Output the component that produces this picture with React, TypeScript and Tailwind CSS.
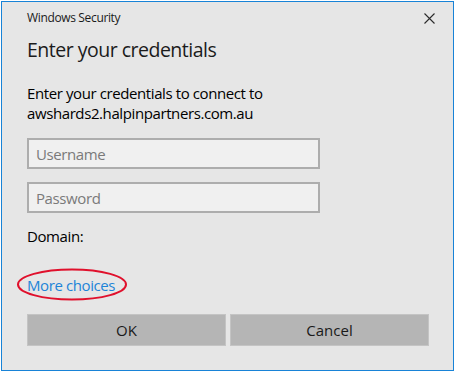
import { useState } from "react";

export default function App() {
  const [username, setUsername] = useState("");
  const [password, setPassword] = useState("");

  return (
    <div className="w-[457px] h-[374px] bg-white pl-px pt-px" style={{ fontFamily: '"Open Sans", "Noto Sans", sans-serif' }}>
      <div className="w-[453px] h-[370px] border border-[#1883d7] bg-[#e6e6e6] flex flex-col pl-[25px] pr-[24px]">
        <div className="mt-[6px] h-5 flex items-center justify-between -mr-[7px]">
          <span className="text-[12px] leading-5 tracking-[-0.35px] text-[#1a1a1a]">Windows Security</span>
          <svg width="11" height="11" viewBox="0 0 11 11" className="mr-[1px]">
            <path d="M0.5 0.5 L10.5 10.5 M10.5 0.5 L0.5 10.5" stroke="#2b2b2b" strokeWidth="1.1" />
          </svg>
        </div>

        <h1 className="mt-2 text-[19.5px] leading-7 tracking-[-0.5px] text-[#1b1b1b]">Enter your credentials</h1>

        <p className="mt-[19px] text-[15px] leading-5 tracking-[-0.4px] text-black">
          Enter your credentials to connect to
          <br />
          awshards2.halpinpartners.com.au
        </p>

        <input
          value={username}
          onChange={(e) => setUsername(e.target.value)}
          placeholder="Username"
          className="mt-[15px] w-[293px] h-[31px] border-2 border-[#adadad] bg-[#f0f0f0] px-[7px] text-[15px] tracking-[-0.4px] text-black placeholder:text-[#7a7a7a] outline-none"
        />
        <input
          type="password"
          value={password}
          onChange={(e) => setPassword(e.target.value)}
          placeholder="Password"
          className="mt-[13px] w-[293px] h-[31px] border-2 border-[#adadad] bg-[#f0f0f0] px-[7px] text-[15px] tracking-[-0.4px] text-black placeholder:text-[#7a7a7a] outline-none"
        />

        <div className="mt-[13px] text-[15px] leading-5 tracking-[-0.4px] text-black">Domain:</div>

        <div className="mt-[27px] relative self-start">
          <a className="text-[15px] leading-5 tracking-[-0.4px] text-[#1d84d8] cursor-pointer">More choices</a>
          <svg className="absolute left-[-11px] top-[-5px] pointer-events-none" width="112" height="33" viewBox="0 0 112 33">
            <ellipse cx="56" cy="16.5" rx="54" ry="15" fill="none" stroke="#e0102c" strokeWidth="2" />
          </svg>
        </div>

        <div className="mt-[17px] flex gap-1">
          <button className="w-[199px] h-[32px] bg-[#b5b5b5] border border-[#c4c4c4] text-[15px] text-[#1a1a1a]">OK</button>
          <button className="w-[199px] h-[32px] bg-[#b5b5b5] border border-[#c4c4c4] text-[15px] text-[#1a1a1a]">Cancel</button>
        </div>
      </div>
    </div>
  );
}
